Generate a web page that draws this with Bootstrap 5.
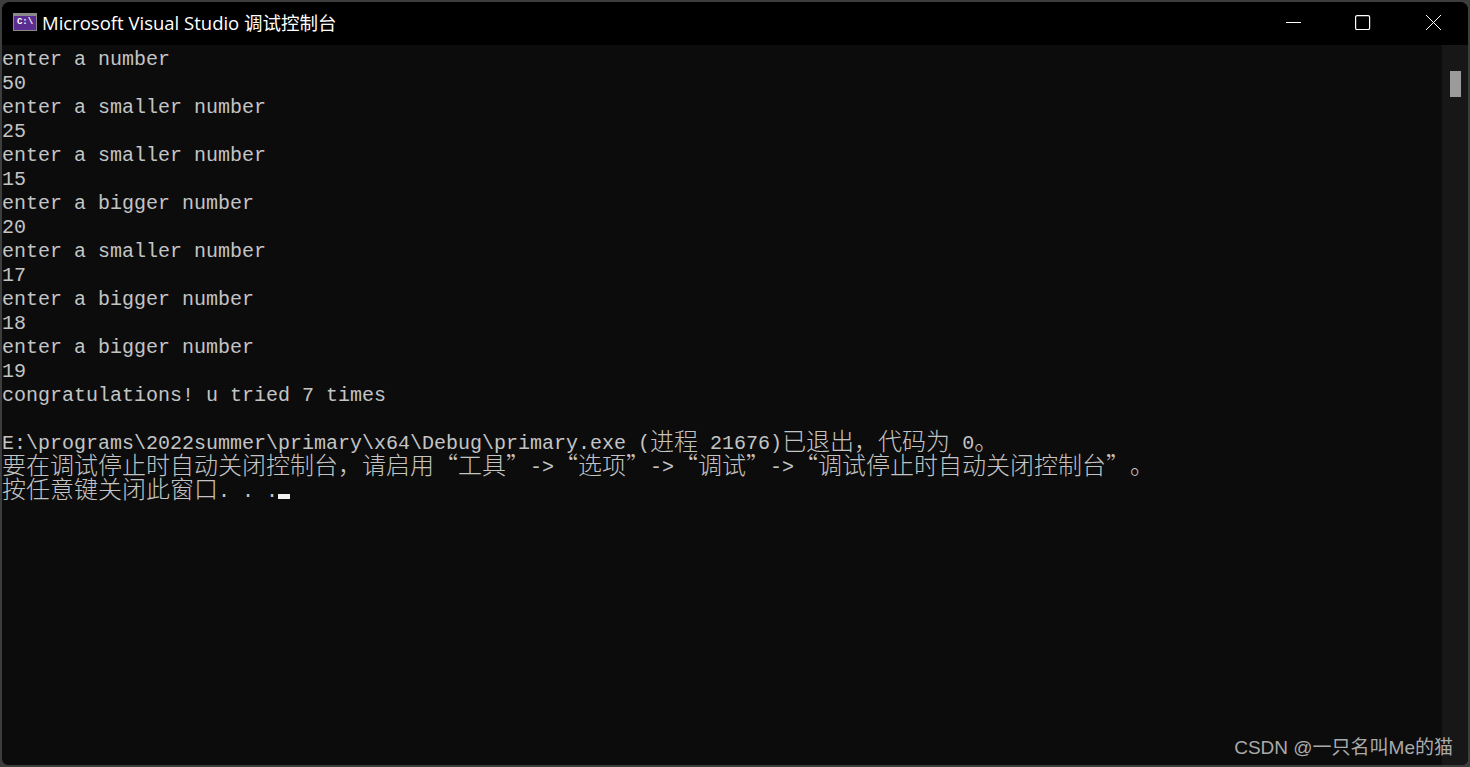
<!doctype html>
<html lang="zh">
<head>
<meta charset="utf-8">
<link rel="stylesheet" href="https://cdn.jsdelivr.net/npm/bootstrap@5.3.0/dist/css/bootstrap.min.css">
<style>
html,body{height:100%;background:#3d3d3d;overflow:hidden}
.desk{height:767px;padding:2px 2px 2px 2px}
.win{height:100%;background:#0c0c0c;border-radius:8px 8px 6px 6px;overflow:hidden}
.tbar{height:43px;background:#000;color:#fff;font:18.5px "Open Sans","Noto Sans CJK SC",sans-serif;padding:0 0 3px 11px}
.ttl{margin-left:5px;white-space:nowrap}
.cico{width:24px;height:18px;background:#5c2d91;border:1px solid #8a8a8a;border-top-width:3px;color:#fff;font:bold 9px/12px "Liberation Mono",monospace;text-align:center}
.wbtn{width:70px;height:40px}
.out{font:20px/24px "Liberation Mono",monospace;color:#c4c4c4;padding-top:3px}
.ln{height:24px;white-space:pre}
.zh{font-family:"Noto Sans CJK SC",sans-serif;font-size:24px;font-weight:300;line-height:16px;display:inline-block;vertical-align:top;text-spacing-trim:space-all}
.cur{display:inline-block;width:12px;height:5px;background:#f2f2f2;vertical-align:baseline;margin-bottom:-2px}
.sbar{width:26px;background:#171717;padding-top:26px}
.thumb{width:11px;height:26px;background:#9b9b9b;margin-left:8px}
.mark-w{position:absolute;right:15px;bottom:6px;color:#aaa;font:19px/22px "Liberation Sans","Noto Sans CJK SC",sans-serif}
</style>
</head>
<body>
<div class="desk">
<div class="win d-flex flex-column position-relative">
  <div class="tbar d-flex align-items-center flex-shrink-0">
    <div class="cico">C:\</div>
    <span class="ttl">Microsoft Visual Studio 调试控制台</span>
    <div class="ms-auto d-flex">
      <div class="wbtn d-flex align-items-center justify-content-center"><svg width="16" height="16" viewBox="0 0 16 16"><path d="M1 8.500h15" stroke="#fff"/></svg></div>
      <div class="wbtn d-flex align-items-center justify-content-center"><svg width="16" height="16" viewBox="0 0 16 16"><rect x=".6" y="1.600" width="14" height="14" rx="1.500" fill="none" stroke="#fff" stroke-width="1.200"/></svg></div>
      <div class="wbtn d-flex align-items-center justify-content-center"><svg width="16" height="16" viewBox="0 0 16 16"><path d="M1 1l15 15M16 1L1 16" stroke="#fff"/></svg></div>
    </div>
  </div>
  <div class="d-flex flex-grow-1">
    <div class="out flex-grow-1">
      <div class="ln">enter a number</div>
      <div class="ln">50</div>
      <div class="ln">enter a smaller number</div>
      <div class="ln">25</div>
      <div class="ln">enter a smaller number</div>
      <div class="ln">15</div>
      <div class="ln">enter a bigger number</div>
      <div class="ln">20</div>
      <div class="ln">enter a smaller number</div>
      <div class="ln">17</div>
      <div class="ln">enter a bigger number</div>
      <div class="ln">18</div>
      <div class="ln">enter a bigger number</div>
      <div class="ln">19</div>
      <div class="ln">congratulations! u tried 7 times</div>
      <div class="ln"></div>
      <div class="ln">E:\programs\2022summer\primary\x64\Debug\primary.exe (<span class="zh">进程</span> 21676)<span class="zh">已退出，代码为</span> 0<span class="zh">。</span></div>
      <div class="ln"><span class="zh">要在调试停止时自动关闭控制台，请启用“工具”</span>-&gt;<span class="zh">“选项”</span>-&gt;<span class="zh">“调试”</span>-&gt;<span class="zh">“调试停止时自动关闭控制台”。</span></div>
      <div class="ln"><span class="zh">按任意键关闭此窗口</span>. . .<span class="cur"></span></div>
    </div>
    <div class="sbar flex-shrink-0"><div class="thumb"></div></div>
  </div>
  <div class="mark-w">CSDN @一只名叫Me的猫</div>
</div>
</div>
<script src="https://cdn.jsdelivr.net/npm/bootstrap@5.3.0/dist/js/bootstrap.bundle.min.js"></script>
</body>
</html>
